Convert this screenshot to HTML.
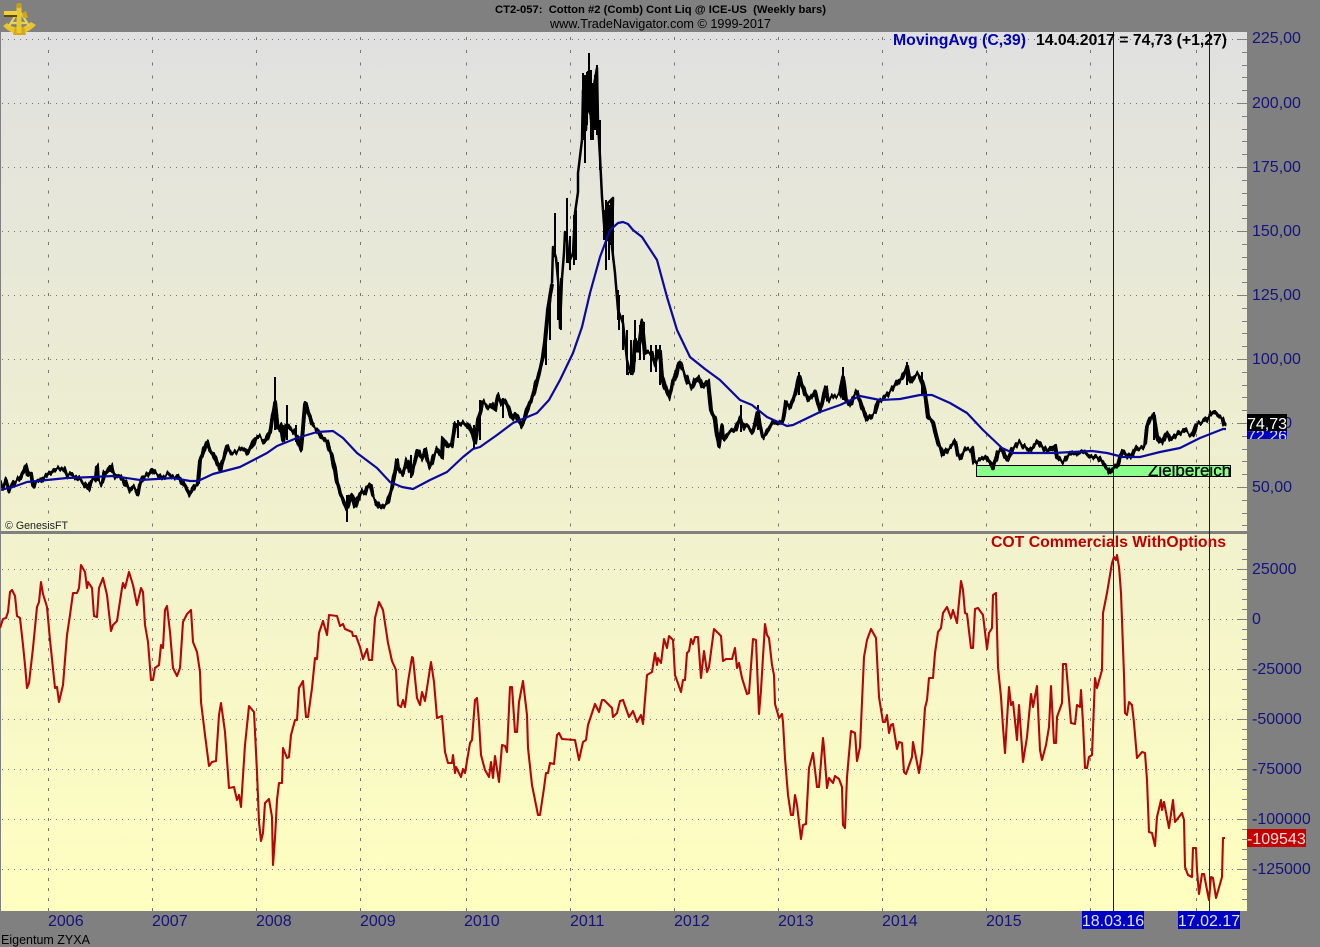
<!DOCTYPE html>
<html lang="de"><head><meta charset="utf-8"><title>CT2-057 Cotton #2</title>
<style>html,body{margin:0;padding:0;background:#808080}svg{display:block}text{font-family:"Liberation Sans",Arial,sans-serif;white-space:pre}</style>
</head><body>
<svg xmlns="http://www.w3.org/2000/svg" width="1320" height="947" viewBox="0 0 1320 947">
<defs>
<linearGradient id="bg" x1="0" y1="0" x2="0" y2="1"><stop offset="0" stop-color="#e0e0e0"/><stop offset="1" stop-color="#ffffc0"/></linearGradient>
<clipPath id="cz"><rect x="976" y="465" width="255" height="12"/></clipPath>
<clipPath id="cb"><rect x="1247" y="431" width="40" height="8"/></clipPath>
<clipPath id="c1"><rect x="1" y="32" width="1246" height="499"/></clipPath>
<filter id="jag" filterUnits="userSpaceOnUse" x="0" y="0" width="1320" height="947" color-interpolation-filters="sRGB">
<feTurbulence type="fractalNoise" baseFrequency="0.42 0.015" numOctaves="1" seed="7" result="n"/>
<feColorMatrix in="n" type="matrix" values="1 0 0 0 0  0 0 0 0 0.5  0 0 0 0 0  0 0 0 0 1" result="m"/>
<feDisplacementMap in="SourceGraphic" in2="m" scale="10" xChannelSelector="G" yChannelSelector="R"/>
</filter>
</defs>
<rect width="1320" height="947" fill="#808080"/>
<rect x="1" y="32" width="1246" height="879" fill="url(#bg)"/>
<rect x="0" y="531" width="1247" height="3" fill="#808080"/>
<!-- grid -->
<g stroke="#77776c" stroke-width="1" fill="none" stroke-dasharray="1 5" shape-rendering="crispEdges">
<path d="M2 39.5H1237M2 103.5H1237M2 167.5H1237M2 231.5H1237M2 295.5H1237M2 359.5H1237M2 423.5H1237M2 487.5H1237M2 569.5H1237M2 619.5H1237M2 669.5H1237M2 719.5H1237M2 769.5H1237M2 819.5H1237M2 869.5H1237"/>
</g>
<g stroke="#77776c" stroke-width="1" fill="none" stroke-dasharray="3 9.8" shape-rendering="crispEdges">
<path d="M48.5 37V531M152.5 37V531M256.5 37V531M360.5 37V531M466.5 37V531M570.5 37V531M674.5 37V531M778.5 37V531M882.5 37V531M986.5 37V531M1090.5 37V531M1196.5 37V531"/>
</g>
<g stroke="#77776c" stroke-width="1" fill="none" stroke-dasharray="3 7" shape-rendering="crispEdges">
<path d="M48.5 538V911M152.5 538V911M256.5 538V911M360.5 538V911M466.5 538V911M570.5 538V911M674.5 538V911M778.5 538V911M882.5 538V911M986.5 538V911M1090.5 538V911M1196.5 538V911"/>
</g>
<!-- right ticks -->
<g stroke="#808080" stroke-width="1" fill="none" shape-rendering="crispEdges">
<path d="M1237 39.5H1247M1237 103.5H1247M1237 167.5H1247M1237 231.5H1247M1237 295.5H1247M1237 359.5H1247M1237 423.5H1247M1237 487.5H1247M1237 569.5H1247M1237 619.5H1247M1237 669.5H1247M1237 719.5H1247M1237 769.5H1247M1237 819.5H1247M1237 869.5H1247"/>
<path d="M1242 52.5H1247M1242 65.5H1247M1242 77.5H1247M1242 90.5H1247M1242 116.5H1247M1242 129.5H1247M1242 141.5H1247M1242 154.5H1247M1242 180.5H1247M1242 193.5H1247M1242 205.5H1247M1242 218.5H1247M1242 244.5H1247M1242 257.5H1247M1242 269.5H1247M1242 282.5H1247M1242 308.5H1247M1242 321.5H1247M1242 333.5H1247M1242 346.5H1247M1242 372.5H1247M1242 385.5H1247M1242 397.5H1247M1242 410.5H1247M1242 436.5H1247M1242 449.5H1247M1242 461.5H1247M1242 474.5H1247M1242 500.5H1247M1242 513.5H1247M1242 525.5H1247"/>
<path d="M1242 549.5H1247M1242 559.5H1247M1242 579.5H1247M1242 589.5H1247M1242 599.5H1247M1242 609.5H1247M1242 629.5H1247M1242 639.5H1247M1242 649.5H1247M1242 659.5H1247M1242 679.5H1247M1242 689.5H1247M1242 699.5H1247M1242 709.5H1247M1242 729.5H1247M1242 739.5H1247M1242 749.5H1247M1242 759.5H1247M1242 779.5H1247M1242 789.5H1247M1242 799.5H1247M1242 809.5H1247M1242 829.5H1247M1242 839.5H1247M1242 849.5H1247M1242 859.5H1247M1242 879.5H1247M1242 889.5H1247M1242 899.5H1247"/>
</g>
<!-- green zone -->
<rect x="976.5" y="465.5" width="254" height="11" fill="#8aff8a" stroke="#000" stroke-width="1"/>
<text x="1148" y="476" font-size="17" fill="#000" stroke="#000" stroke-width=".3" clip-path="url(#cz)">Zielbereich</text>
<!-- cursor lines -->
<path d="M1113.5 32V911M1209.5 32V911" stroke="#0000e0" stroke-width="1" fill="none" shape-rendering="crispEdges"/>
<!-- price -->
<g clip-path="url(#c1)">
<g fill="none" stroke="#000" stroke-linejoin="round" stroke-linecap="butt" filter="url(#jag)">
<polyline stroke-width="4" points="0,482 3,488 6,480 9,490 13,484 17,480 20,478 24,470 26,466 28,476 31,474 33,486 36,482 40,481 45,476 50,473 55,470 60,468 65,470 67,476 72,474 80,480 84,484 88,490 92,480 96,478 97,466 98,480 102,484 104,474 108,470 111,466 115,477 120,476 123,480 127,486 130,492 134,488 138,494 140,484 143,478 148,474 152,470 156,474 163,478 168,474 173,477 178,476 182,482 186,488 190,495 194,488 198,484 200,460 203,452 207,441 210,450 213,453 216,460 220,470 223,460 227,447 231,453 235,452 240,449 245,448 248,453 252,446 256,438 260,437 265,442 270,433 273,415 275,403 278,430 281,425 283,440 286,424 290,428 295,433 298,440 301,450 303,428 305,403 308,412 312,425 317,430 322,438 327,442 332,457 335,470 337,482 340,493 344,502 347,509 350,498 352,495 355,507 358,498 362,490 365,492 368,485 371,488 373,497 377,503 380,508 384,505 387,503 390,495 392,487 395,472 397,460 398,469 403,474 407,460 410,470 412,474 415,460 418,450 422,458 425,450 428,462 430,467 434,456 437,450 442,457 443,438 448,446 452,445 455,424 460,426 464,423 467,424 471,430 475,443 478,420 483,402 488,408 492,404 495,410 498,396 502,404 505,401 508,407 512,418 515,413 519,420 522,427 525,418 528,407 533,396 537,380 540,368 543,357 545,342 548,310 552,283"/>
<polyline stroke-width="4" points="628,372 633,372 635,340 638,352 640,340 642,322 645,355 648,353 652,353 655,363 658,352 660,350 662,377 665,387 669,397 673,382 676,375 679,362 682,368 685,375 688,382 692,388 695,380 698,377 701,384 703,387 708,380 711,410 715,420 717,435 719,447 722,427 723,440 728,434 735,430 740,418 745,428 748,427 753,433 758,413 760,427 763,437 768,430 773,422 778,424 783,420 786,402 790,407 795,395 799,376 803,388 808,400 812,396 815,392 820,410 824,396 826,387 828,400 834,396 840,395 843,377 846,400 850,405 854,396 857,392 862,407 867,420 871,416 875,413 878,402 883,398 887,395 893,388 900,380 904,374 907,368 910,382 914,376 918,373 922,380 925,393 928,417 933,423 937,440 943,455 947,450 950,447 955,442 958,455 960,458 965,450 972,448 974,463 980,459 985,457 990,462 993,468 998,453 1002,448 1006,458 1008,460 1012,450 1020,442 1025,447 1030,450 1034,446 1038,442 1043,448 1047,452 1052,448 1055,445 1057,457 1063,462 1068,456 1073,453 1080,453 1085,452 1090,456 1093,457 1098,458 1103,463 1107,468 1110,472 1114,468 1118,465 1120,456 1123,450 1127,455 1130,458 1134,452 1137,448 1142,447 1145,445 1147,427 1150,420 1154,415 1156,430 1157,436 1160,442 1162,443 1165,437 1167,433 1170,440 1173,438 1178,433 1183,430 1188,434 1193,435 1195,428 1197,423 1202,423 1208,418 1211,414 1215,413 1218,416 1222,418 1225,426"/>
</g>
<g fill="none" stroke="#000" stroke-linejoin="round" stroke-linecap="butt">
<polyline stroke-width="2.5" points="552,283 553,247 556,258 559,290 560,328 562,278 564,253 565,232 567,240 569,262 573,253 575,213 578,192 578,173 582,140 583,90 586,130 588,72 590,105 592,135 594,85 597,68 598,123 600,157 602,197 605,237 608,203 613,198 612,247 615,273 618,310 623,323 627,360 630,372"/>
<path stroke-width="2" d="M275 377V430M287 405V440M347 495V522M301 440V452M283 425V440M296 425V442M555 213V257M567 198V263M570 236V270M558 262V320M561 278V330M546 330V365M550 300V340M576 210V260M574 215V265M589 53V110M583 73V140M587 72V125M597 65V135M591 70V140M585 75V163M593 83V140M595 75V130M600 120V170M606 200V270M609 205V260M613 198V260M604 210V240M611 200V245M618 290V320M627 330V375M631 340V375M635 320V362M640 325V360M651 345V372M656 345V372M660 345V385M741 405V432M758 405V430M411 455V478M1154 412V440M799 372V395M843 367V400M907 362V385M922 372V395M458 420V438M503 398V418M480 400V440M474 425V448M619 295V330M623 315V350M644 322V360"/>
<polygon fill="#000" stroke="none" points="586,84 598,84 599,118 597,126 591,118 588,112 585,125"/>
<polygon fill="#000" stroke="none" points="606,215 613,215 612,245 606,240"/>
</g>
</g>
<!-- moving average -->
<polyline fill="none" stroke="#0a0a9c" stroke-width="2.2" stroke-linejoin="round" clip-path="url(#c1)" points="0,490 13,487 27,482 47,480 67,478 93,477 113,476 140,480 173,478 190,481 198,481 213,474 240,467 267,453 277,446 297,438 317,432 333,431 343,438 357,453 377,468 390,482 402,487 413,489 430,480 447,472 463,457 473,449 480,447 497,435 513,423 537,413 549,400 560,380 573,353 582,327 590,293 600,257 610,230 618,223 623,222 628,224 633,230 642,237 657,260 667,297 677,330 690,357 705,369 720,380 740,400 752,405 767,417 787,426 793,425 820,412 840,405 860,396 880,400 900,399 920,395 932,395 950,403 967,413 983,430 1002,448 1013,453 1053,453 1092,451 1107,453 1123,457 1140,457 1160,452 1180,448 1200,438 1223,429 1226,429"/>
<!-- COT -->
<polyline fill="none" stroke="#b40808" stroke-width="2.1" stroke-linejoin="round" points="0,628 3,619 6,618 8,612 10,592 12,590 15,596 17,616 20,618 23,645 25,665 27,688 29,683 33,648 37,607 39,602 41,582 43,594 47,607 50,640 55,688 57,687 59,702 63,685 67,635 70,615 73,593 77,593 79,588 81,565 85,572 87,588 88,582 92,588 94,616 97,617 99,588 103,578 107,595 111,631 113,625 117,621 122,588 123,583 125,588 129,572 133,585 137,605 141,588 143,592 145,625 148,642 151,680 153,680 155,668 159,665 161,645 163,648 165,610 167,606 170,632 173,668 177,676 180,668 183,622 187,614 191,610 193,642 197,652 200,672 201,702 205,735 209,766 212,762 216,761 219,715 221,703 225,732 229,788 234,787 237,800 239,795 241,807 245,745 249,706 254,712 257,772 259,822 261,841 263,833 265,803 269,799 272,817 273,865 275,838 277,800 279,783 282,783 283,748 287,758 289,757 291,735 295,720 297,720 299,688 303,681 306,717 308,717 312,688 315,658 317,659 319,633 323,621 327,635 329,615 337,616 340,626 343,624 345,629 352,632 353,636 356,636 360,647 363,659 367,649 369,660 372,660 375,618 379,602 383,610 388,643 392,661 396,670 398,705 401,707 403,700 405,707 408,682 412,657 413,658 417,698 420,705 422,692 425,701 431,662 434,682 437,718 442,716 445,752 448,763 452,763 453,755 455,773 456,767 461,777 463,769 465,773 470,743 472,740 475,700 477,698 479,722 481,755 485,770 489,777 491,762 493,778 495,756 499,782 502,745 505,746 507,752 510,687 512,687 515,732 517,732 519,702 523,681 527,715 528,748 532,785 534,795 538,815 540,815 544,788 546,773 548,773 550,763 554,764 557,735 559,733 562,739 575,740 579,760 583,742 586,740 588,725 592,713 595,704 599,712 602,700 604,700 612,708 613,717 617,713 620,701 623,700 629,717 633,711 637,722 641,715 643,724 647,675 652,672 655,653 657,665 658,658 661,663 664,639 667,648 669,636 673,640 675,675 681,692 683,680 685,680 687,653 689,651 691,639 693,644 695,637 698,637 701,678 704,651 707,672 709,667 714,629 721,636 723,661 726,659 732,659 735,648 737,668 739,663 742,678 747,694 749,693 753,639 756,640 759,714 761,690 765,624 767,635 769,638 772,665 774,675 775,704 779,718 782,714 783,722 785,758 788,795 791,815 793,815 795,795 797,805 801,839 803,825 806,824 809,768 813,753 817,787 819,787 821,762 823,738 824,748 827,788 829,778 833,783 835,776 839,779 842,787 843,825 845,828 847,777 851,731 855,733 857,761 860,747 864,657 867,640 871,629 876,638 879,697 883,722 885,722 887,715 889,733 891,725 893,724 897,749 899,742 902,743 904,772 906,774 912,757 913,742 919,773 922,753 925,708 927,700 929,678 933,678 935,653 938,632 941,628 943,613 947,607 951,618 953,610 957,623 961,581 963,590 965,613 967,614 971,648 973,648 975,609 978,608 983,615 987,649 989,633 992,628 993,595 996,593 998,667 1001,697 1003,727 1005,753 1009,687 1011,705 1013,702 1017,740 1019,705 1023,762 1027,737 1031,694 1033,707 1037,686 1040,750 1042,760 1046,745 1049,727 1051,686 1054,743 1056,743 1057,717 1062,703 1063,664 1066,664 1071,723 1075,724 1077,705 1080,707 1081,690 1083,723 1085,768 1087,768 1089,757 1092,755 1095,678 1097,688 1102,670 1103,613 1107,593 1112,563 1114,557 1116,560 1117,555 1119,567 1121,593 1124,675 1125,713 1127,715 1129,702 1132,705 1134,723 1137,758 1142,752 1145,753 1147,780 1149,832 1152,833 1155,846 1157,817 1161,800 1162,810 1164,802 1169,828 1173,800 1175,822 1182,813 1184,820 1185,867 1188,875 1192,877 1193,848 1196,848 1197,870 1199,894 1202,874 1204,874 1207,890 1209,900 1211,877 1213,878 1216,898 1222,877 1223,838 1225,838"/>
<!-- header -->
<text x="495" y="13" font-size="11" font-weight="bold" fill="#000" textLength="331" lengthAdjust="spacingAndGlyphs">CT2-057:  Cotton #2 (Comb) Cont Liq @ ICE-US  (Weekly bars)</text>
<text x="550" y="28" font-size="12.6" fill="#000" textLength="221" lengthAdjust="spacingAndGlyphs">www.TradeNavigator.com © 1999-2017</text>
<!-- sextant -->
<g>
<path d="M3 26 Q19 42 36 25 L31 22 Q19 33 7 23Z" fill="#e8c52a"/>
<path d="M19 10 L9 26 M19 10 L29 26 M10 23 L28 23" stroke="#e6d060" stroke-width="2.2" fill="none"/>
<path d="M13 35 L26 35 L24 27 L15 27Z" fill="#d6a818"/>
<rect x="16.5" y="6" width="5" height="27" fill="#e8c92e"/>
<circle cx="19" cy="5.5" r="2.8" fill="#c9a014"/>
<rect x="4" y="11" width="13" height="5" fill="#eed23a"/>
<rect x="4" y="15" width="13" height="2" fill="#5e4a08"/>
<path d="M22 13 L26 11 L28 18 L23 18Z" fill="#cba818"/>
</g>
<!-- legends -->
<text x="893" y="45" font-size="16" font-weight="bold" fill="#0000b4" textLength="133" lengthAdjust="spacingAndGlyphs">MovingAvg (C,39)</text>
<text x="1036" y="45" font-size="16" font-weight="bold" fill="#000" textLength="191" lengthAdjust="spacingAndGlyphs">14.04.2017 = 74,73 (+1,27)</text>
<text x="991" y="547" font-size="16" font-weight="bold" fill="#c00000" textLength="235" lengthAdjust="spacingAndGlyphs">COT Commercials WithOptions</text>
<text x="5" y="529" font-size="11" fill="#222" textLength="63" lengthAdjust="spacingAndGlyphs">© GenesisFT</text>
<!-- axis labels -->
<g font-size="16" fill="#14147c">
<text x="1252" y="43">225,00</text><text x="1252" y="108">200,00</text><text x="1252" y="172">175,00</text><text x="1252" y="236">150,00</text><text x="1252" y="300">125,00</text><text x="1252" y="364">100,00</text><text x="1252" y="428">75,00</text><text x="1252" y="492">50,00</text>
<text x="1252" y="574">25000</text><text x="1252" y="624">0</text><text x="1252" y="674">-25000</text><text x="1252" y="724">-50000</text><text x="1252" y="774">-75000</text><text x="1252" y="824">-100000</text><text x="1252" y="874">-125000</text>
<text x="48" y="926">2006</text><text x="152" y="926">2007</text><text x="256" y="926">2008</text><text x="360" y="926">2009</text><text x="464" y="926">2010</text><text x="570" y="926">2011</text><text x="674" y="926">2012</text><text x="778" y="926">2013</text><text x="882" y="926">2014</text><text x="986" y="926">2015</text>
</g>
<text x="1" y="944" font-size="12.5" fill="#000">Eigentum ZYXA</text>
<!-- value badges -->
<rect x="1247" y="431" width="40" height="8" fill="#0000c0"/>
<text x="1247" y="441" font-size="16" fill="#e0e0ff" clip-path="url(#cb)">72,26</text>
<rect x="1247" y="414" width="40" height="17" fill="#000"/>
<text x="1247" y="429" font-size="16" fill="#fff">74,73</text>
<rect x="1247" y="829" width="59" height="18" fill="#c40000"/>
<text x="1247" y="844" font-size="16" fill="#ffe0e0">-109543</text>
<rect x="1082" y="911" width="62" height="18" fill="#0000c4"/>
<text x="1113" y="926" font-size="16" fill="#e0e0ff" text-anchor="middle">18.03.16</text>
<rect x="1178" y="911" width="62" height="18" fill="#0000c4"/>
<text x="1209" y="926" font-size="16" fill="#e0e0ff" text-anchor="middle">17.02.17</text>
</svg>
</body></html>
